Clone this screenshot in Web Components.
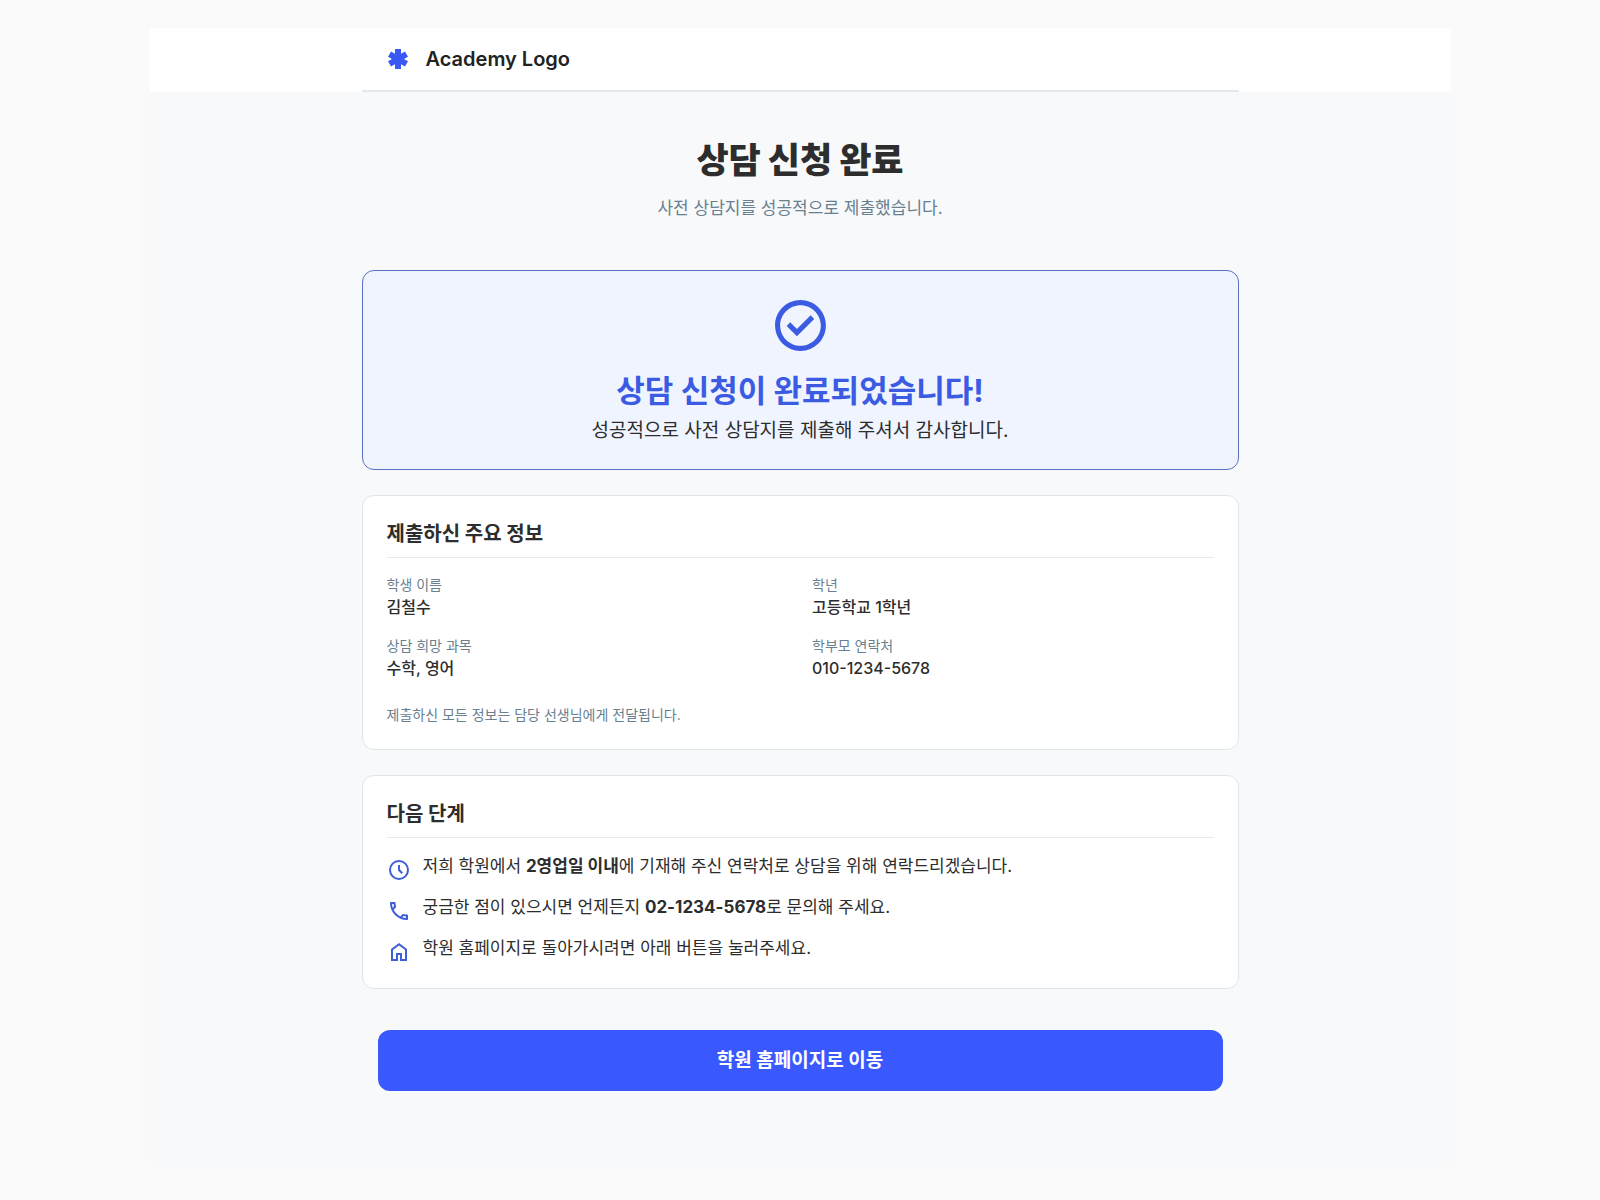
<!DOCTYPE html>
<html lang="ko">
<head>
<meta charset="utf-8">
<meta name="viewport" content="width=device-width, initial-scale=1">
<title>상담 신청 완료</title>
<style>
body {
  margin: 0;
  background: #fafafa;
  color: #2d2d2d;
  font-family: Inter, "Noto Sans CJK KR", sans-serif;
  font-size: 16px;
  line-height: 24px;
}
</style>
</head>
<body>

<academy-page>
  <academy-header slot="header">Academy Logo</academy-header>

  <page-title>
    상담 신청 완료
    <span slot="sub">사전 상담지를 성공적으로 제출했습니다.</span>
  </page-title>

  <success-banner>
    상담 신청이 완료되었습니다!
    <span slot="message">성공적으로 사전 상담지를 제출해 주셔서 감사합니다.</span>
  </success-banner>

  <info-card heading="제출하신 주요 정보">
    <info-list>
      <info-item label="학생 이름">김철수</info-item>
      <info-item label="학년">고등학교 1학년</info-item>
      <info-item label="상담 희망 과목">수학, 영어</info-item>
      <info-item label="학부모 연락처">010-1234-5678</info-item>
    </info-list>
    <span slot="note">제출하신 모든 정보는 담당 선생님에게 전달됩니다.</span>
  </info-card>

  <info-card heading="다음 단계">
    <step-list>
      <step-item icon="clock">저희 학원에서 <b>2영업일 이내</b>에 기재해 주신 연락처로 상담을 위해 연락드리겠습니다.</step-item>
      <step-item icon="phone">궁금한 점이 있으시면 언제든지 <b>02-1234-5678</b>로 문의해 주세요.</step-item>
      <step-item icon="home">학원 홈페이지로 돌아가시려면 아래 버튼을 눌러주세요.</step-item>
    </step-list>
  </info-card>

  <action-button>학원 홈페이지로 이동</action-button>
</academy-page>

<script>
'use strict';

(function() {

// 24x24 viewBox
const ICONS = {
  logo: 'M9 2h6v20H9zM5.02 4.5L21.98 14.3 18.98 19.5 2.02 9.7zM21.98 9.7L5.02 19.5 2.02 14.3 18.98 4.5z',
  check: 'M12 2C6.48 2 2 6.48 2 12s4.48 10 10 10 10-4.48 10-10S17.52 2 12 2zm0 18c-4.41 0-8-3.59-8-8s3.59-8 8-8 8 3.59 8 8-3.59 8-8 8zm4-12L10.6 13.4l-2.65-2.65-1.4 1.4 4.05 4.1L17.4 9.4z',
  clock: 'M12 2a10 10 0 1 0 0 20 10 10 0 0 0 0-20zm0 18a8 8 0 1 1 0-16 8 8 0 0 1 0 16zM13 7h-2v5.4l3.6 3.6 1.4-1.4-3-3z',
  phone: 'M6.54 5c.06.89.21 1.76.45 2.59l-1.2 1.2c-.41-1.2-.67-2.47-.76-3.79h1.51m9.86 12.02c.85.24 1.72.39 2.6.45v1.49c-1.32-.09-2.59-.35-3.8-.75l1.2-1.19M7.5 3H4c-.55 0-1 .45-1 1 0 9.39 7.61 17 17 17 .55 0 1-.45 1-1v-3.49c0-.55-.45-1-1-1-1.24 0-2.45-.2-3.57-.57-.1-.04-.21-.05-.31-.05-.26 0-.51.1-.71.29l-2.2 2.2c-2.83-1.45-5.15-3.76-6.59-6.59l2.2-2.2c.28-.28.36-.67.25-1.02C8.7 6.45 8.5 5.25 8.5 4c0-.55-.45-1-1-1z',
  home: 'M6 19h3v-6h6v6h3v-9l-6-4.5L6 10v9zm-2 2V9l8-6 8 6v12h-7v-6h-2v6z',
};

function icon(name) {
  return `<svg viewBox="0 0 24 24" aria-hidden="true"><path fill="currentColor" d="${ICONS[name]}"/></svg>`;
}

class AcademyPageElement extends HTMLElement {
  constructor() {
    super();
    this.attachShadow({mode: 'open'}).innerHTML = `
<style>
:host {
  display: block;
  box-sizing: border-box;
  min-height: 100vh;
  max-width: 1301px;
  margin: 0 auto;
  padding: 28px 0 32px;
}
#frame {
  background: #f8f9fb;
}
main {
  display: flex;
  flex-direction: column;
  gap: 25px;
  max-width: 877px;
  margin: 0 auto;
  padding: 40px 0 75px;
}
</style>
<div id="frame">
  <slot name="header"></slot>
  <main><slot></slot></main>
</div>
    `;
  }
}

class AcademyHeaderElement extends HTMLElement {
  constructor() {
    super();
    this.attachShadow({mode: 'open'}).innerHTML = `
<style>
:host {
  display: block;
  background: #fff;
}
header {
  display: flex;
  align-items: center;
  gap: 16px;
  box-sizing: border-box;
  max-width: 877px;
  margin: 0 auto;
  padding: 19px 24px;
  border-bottom: 2px solid #e3e9ed;
  font-size: 20px;
  font-weight: 600;
  color: #222;
}
svg {
  width: 24px;
  height: 24px;
  color: #3959f6;
}
</style>
<header>${icon('logo')}<span><slot></slot></span></header>
    `;
  }
}

class PageTitleElement extends HTMLElement {
  constructor() {
    super();
    this.attachShadow({mode: 'open'}).innerHTML = `
<style>
:host {
  display: block;
  padding-bottom: 25px;
  text-align: center;
}
h1 {
  margin: 0 0 8px;
  font-size: 35px;
  line-height: 56px;
  font-weight: 900;
}
p {
  margin: 0;
  font-size: 17px;
  color: #68808f;
}
</style>
<h1><slot></slot></h1>
<p><slot name="sub"></slot></p>
    `;
  }
}

class SuccessBannerElement extends HTMLElement {
  constructor() {
    super();
    this.attachShadow({mode: 'open'}).innerHTML = `
<style>
:host {
  display: flex;
  flex-direction: column;
  align-items: center;
  padding: 24px;
  border: 1px solid #5b6fc4;
  border-radius: 12px;
  background: #eff4ff;
  text-align: center;
}
svg {
  width: 61px;
  height: 61px;
  color: #3b5be3;
}
h2 {
  margin: 13px 0 0;
  font-size: 31px;
  line-height: 44px;
  font-weight: 700;
  color: #3b5be3;
}
p {
  margin: 4px 0 0;
  font-size: 19px;
  line-height: 28px;
}
</style>
${icon('check')}
<h2><slot></slot></h2>
<p><slot name="message"></slot></p>
    `;
  }
}

class InfoCardElement extends HTMLElement {
  constructor() {
    super();
    this.attachShadow({mode: 'open'}).innerHTML = `
<style>
:host {
  display: block;
  padding: 24px;
  border: 1px solid #dfe6ea;
  border-radius: 12px;
  background: #fff;
}
h2 {
  margin: 0 0 16px;
  padding-bottom: 8px;
  border-bottom: 1px solid #e6eaed;
  font-size: 20px;
  line-height: 29px;
  font-weight: 700;
}
slot[name=note]::slotted(*) {
  display: block;
  margin-top: 24px;
  font-size: 14px;
  line-height: 21px;
  color: #68808f;
}
</style>
<h2></h2>
<slot></slot>
<slot name="note"></slot>
    `;
  }

  connectedCallback() {
    this.shadowRoot.querySelector('h2').textContent = this.getAttribute('heading');
  }
}

class InfoListElement extends HTMLElement {
  constructor() {
    super();
    this.attachShadow({mode: 'open'}).innerHTML = `
<style>
:host {
  display: grid;
  grid-template-columns: 1fr 1fr;
  gap: 16px 24px;
}
</style>
<slot></slot>
    `;
  }
}

class InfoItemElement extends HTMLElement {
  constructor() {
    super();
    this.attachShadow({mode: 'open'}).innerHTML = `
<style>
:host {
  display: block;
}
dl, dd {
  margin: 0;
}
dt {
  font-size: 14px;
  line-height: 21px;
  color: #68808f;
}
dd {
  font-weight: 500;
}
</style>
<dl>
  <dt></dt>
  <dd><slot></slot></dd>
</dl>
    `;
  }

  connectedCallback() {
    this.shadowRoot.querySelector('dt').textContent = this.getAttribute('label');
  }
}

class StepListElement extends HTMLElement {
  constructor() {
    super();
    this.attachShadow({mode: 'open'}).innerHTML = `
<style>
:host {
  display: flex;
  flex-direction: column;
  gap: 13px;
}
</style>
<slot></slot>
    `;
    this.setAttribute('role', 'list');
  }
}

class StepItemElement extends HTMLElement {
  constructor() {
    super();
    this.attachShadow({mode: 'open'}).innerHTML = `
<style>
:host {
  display: flex;
  gap: 12px;
  font-size: 17px;
}
svg {
  flex: none;
  width: 24px;
  height: 24px;
  margin-top: 4px;
  color: #3f5fd8;
}
::slotted(b) {
  font-weight: 700;
}
</style>
${icon(this.getAttribute('icon'))}
<span><slot></slot></span>
    `;
    this.setAttribute('role', 'listitem');
  }
}

class ActionButtonElement extends HTMLElement {
  constructor() {
    super();
    this.attachShadow({mode: 'open'}).innerHTML = `
<style>
:host {
  display: block;
  padding: 16px 16px 0;
}
button {
  display: block;
  width: 100%;
  padding: 16px;
  border: 0;
  border-radius: 12px;
  background: #3959ff;
  color: #fff;
  font: inherit;
  font-size: 19px;
  line-height: 29px;
  font-weight: 700;
  cursor: pointer;
}
</style>
<button type="button"><slot></slot></button>
    `;
  }
}

customElements.define('academy-page', AcademyPageElement);
customElements.define('academy-header', AcademyHeaderElement);
customElements.define('page-title', PageTitleElement);
customElements.define('success-banner', SuccessBannerElement);
customElements.define('info-card', InfoCardElement);
customElements.define('info-list', InfoListElement);
customElements.define('info-item', InfoItemElement);
customElements.define('step-list', StepListElement);
customElements.define('step-item', StepItemElement);
customElements.define('action-button', ActionButtonElement);

}());
</script>
</body>
</html>
